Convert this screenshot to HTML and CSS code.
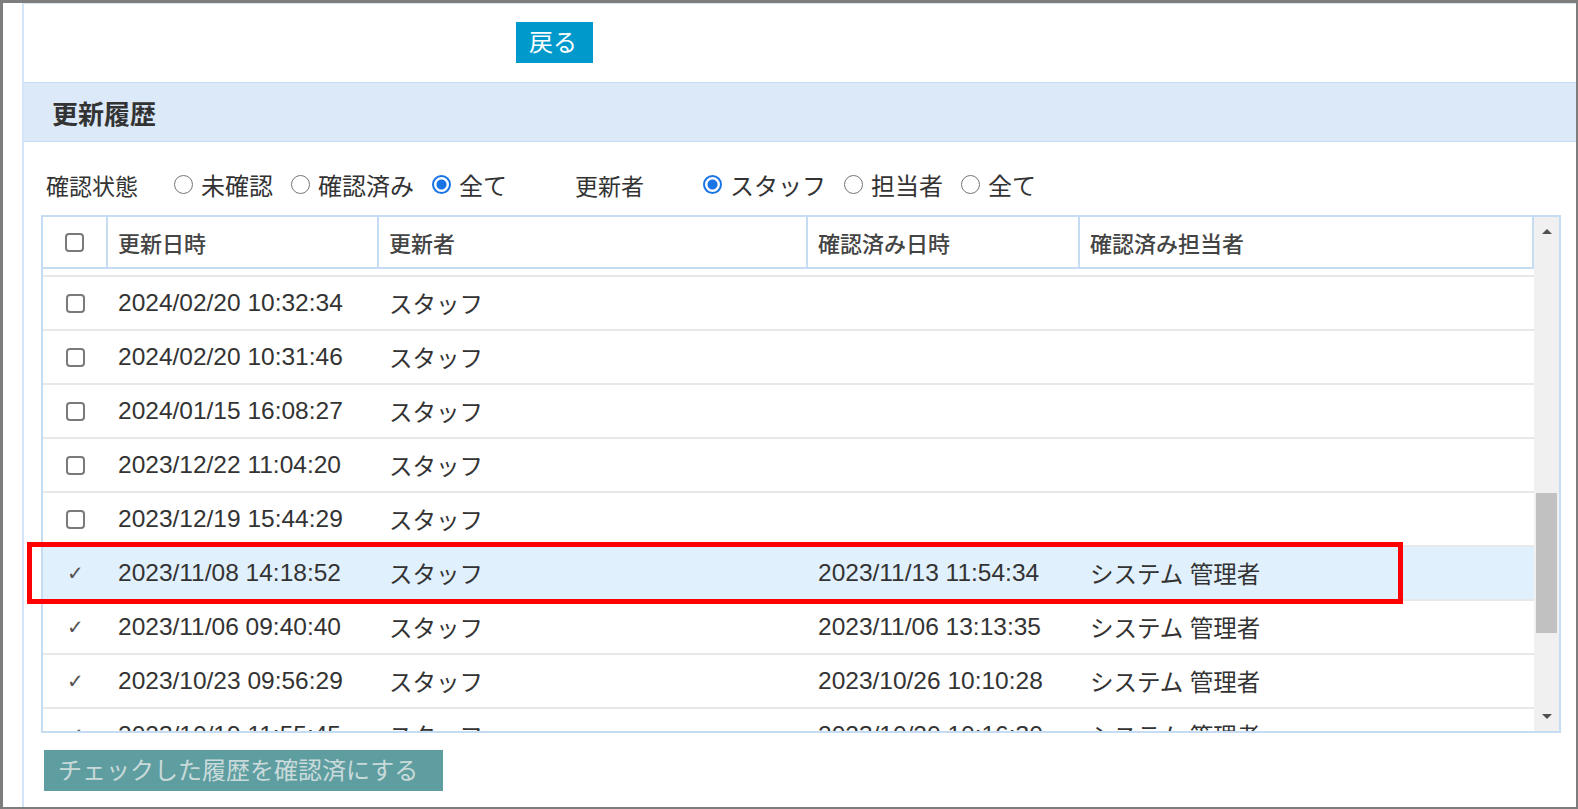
FILE: index.html
```html
<!DOCTYPE html>
<html lang="ja">
<head>
    <meta charset="UTF-8">
    <meta name="viewport" content="width=device-width, initial-scale=1.0">
    <title>更新履歴</title>
    <link rel="stylesheet" href="styles.css">
</head>
<body>

<div class="frame">
    <div class="panel">
        <div class="top-bar">
            <button class="back-btn" type="button">戻る</button>
        </div>

        <div class="section-head">更新履歴</div>

        <div class="filters">
            <div class="filter-group">
                <span class="filter-label">確認状態</span>
                <label class="opt"><input type="radio" name="state">未確認</label>
                <label class="opt"><input type="radio" name="state">確認済み</label>
                <label class="opt"><input type="radio" name="state" checked>全て</label>
            </div>
            <div class="filter-group">
                <span class="filter-label">更新者</span>
                <label class="opt"><input type="radio" name="user" checked>スタッフ</label>
                <label class="opt"><input type="radio" name="user">担当者</label>
                <label class="opt"><input type="radio" name="user">全て</label>
            </div>
        </div>

        <div class="table-wrap">
            <div class="grid">
                <div class="grid-head">
                    <div class="head-cell check"><input type="checkbox"></div>
                    <div class="head-cell">更新日時</div>
                    <div class="head-cell">更新者</div>
                    <div class="head-cell">確認済み日時</div>
                    <div class="head-cell">確認済み担当者</div>
                </div>
                <div class="grid-body">
                    <div class="rows">
                        <!-- row scrolled out of view -->
                        <div class="row spacer"></div>
                        <div class="row">
                            <div class="cell check"><input type="checkbox"></div>
                            <div class="cell">2024/02/20 10:32:34</div>
                            <div class="cell jp">スタッフ</div>
                            <div class="cell"></div>
                            <div class="cell"></div>
                        </div>
                        <div class="row">
                            <div class="cell check"><input type="checkbox"></div>
                            <div class="cell">2024/02/20 10:31:46</div>
                            <div class="cell jp">スタッフ</div>
                            <div class="cell"></div>
                            <div class="cell"></div>
                        </div>
                        <div class="row">
                            <div class="cell check"><input type="checkbox"></div>
                            <div class="cell">2024/01/15 16:08:27</div>
                            <div class="cell jp">スタッフ</div>
                            <div class="cell"></div>
                            <div class="cell"></div>
                        </div>
                        <div class="row">
                            <div class="cell check"><input type="checkbox"></div>
                            <div class="cell">2023/12/22 11:04:20</div>
                            <div class="cell jp">スタッフ</div>
                            <div class="cell"></div>
                            <div class="cell"></div>
                        </div>
                        <div class="row">
                            <div class="cell check"><input type="checkbox"></div>
                            <div class="cell">2023/12/19 15:44:29</div>
                            <div class="cell jp">スタッフ</div>
                            <div class="cell"></div>
                            <div class="cell"></div>
                        </div>
                        <div class="row selected">
                            <div class="cell check"><span class="tick">✓</span></div>
                            <div class="cell">2023/11/08 14:18:52</div>
                            <div class="cell jp">スタッフ</div>
                            <div class="cell">2023/11/13 11:54:34</div>
                            <div class="cell jp">システム 管理者</div>
                        </div>
                        <div class="row">
                            <div class="cell check"><span class="tick">✓</span></div>
                            <div class="cell">2023/11/06 09:40:40</div>
                            <div class="cell jp">スタッフ</div>
                            <div class="cell">2023/11/06 13:13:35</div>
                            <div class="cell jp">システム 管理者</div>
                        </div>
                        <div class="row">
                            <div class="cell check"><span class="tick">✓</span></div>
                            <div class="cell">2023/10/23 09:56:29</div>
                            <div class="cell jp">スタッフ</div>
                            <div class="cell">2023/10/26 10:10:28</div>
                            <div class="cell jp">システム 管理者</div>
                        </div>
                        <div class="row">
                            <div class="cell check"><span class="tick">✓</span></div>
                            <div class="cell">2023/10/19 11:55:45</div>
                            <div class="cell jp">スタッフ</div>
                            <div class="cell">2023/10/20 10:16:30</div>
                            <div class="cell jp">システム 管理者</div>
                        </div>
                    </div>
                </div>
            </div>
            <div class="scrollbar">
                <span class="arrow-up"></span>
                <span class="thumb"></span>
                <span class="arrow-down"></span>
            </div>
        </div>

        <div class="actions">
            <button class="confirm-btn" type="button" disabled>チェックした履歴を確認済にする</button>
        </div>
    </div>

    <!-- annotation -->
    <div class="mark"></div>
</div>

</body>
</html>
```

FILE: styles.css
```css
html, body {
    margin: 0;
    padding: 0;
}

body {
    font-family: "Liberation Sans", "Noto Sans CJK JP", sans-serif;
    color: #333;
    background: #fff;
}

.frame {
    position: relative;
    height: 100vh;
    box-sizing: border-box;
    border-style: solid;
    border-color: #7d7d7d;
    border-width: 3px 2px 2px 3px;
    padding-left: 19px;
    overflow: hidden;
}

.panel {
    height: 100%;
    box-sizing: border-box;
    border-left: 2px solid #d2e4f7;
    border-top: 1px solid #d2e4f7;
}

.top-bar {
    height: 78px;
    box-sizing: border-box;
    padding: 18px 0 0 492px;
}

.back-btn {
    display: block;
    width: 77px;
    height: 41px;
    box-sizing: border-box;
    padding: 0 0 0 13px;
    border: none;
    background-color: #0099cc;
    color: #fff;
    font-family: inherit;
    font-size: 24px;
    line-height: 41px;
    text-align: left;
}

.section-head {
    height: 60px;
    box-sizing: border-box;
    border-top: 1px solid #c8ddf3;
    border-bottom: 1px solid #c8ddf3;
    background-color: #dbe9f8;
    padding-left: 28px;
    display: flex;
    align-items: center;
    font-size: 26px;
    font-weight: bold;
    color: #333;
}

.filters {
    height: 73px;
    box-sizing: border-box;
    padding: 12px 0 0 22px;
    display: flex;
    align-items: center;
    font-size: 24px;
    color: #333;
}

.filter-group {
    display: flex;
    align-items: center;
}

.filter-group + .filter-group {
    margin-left: 50px;
}

.filter-label {
    width: 128px;
    font-size: 23px;
}

.opt {
    display: inline-flex;
    align-items: center;
    margin-right: 18px;
}

.opt input {
    appearance: none;
    -webkit-appearance: none;
    flex-shrink: 0;
    width: 19px;
    height: 19px;
    margin: 0 8px 0 0;
    box-sizing: border-box;
    border: 1.5px solid #767676;
    border-radius: 50%;
    background: #fff;
}

.opt input:checked {
    border: 2px solid #1a74e6;
    background: radial-gradient(circle, #1a74e6 0, #1a74e6 4.5px, #fff 5.5px);
}

.table-wrap {
    margin-left: 17px;
    width: 1520px;
    height: 518px;
    box-sizing: border-box;
    border: 2px solid #c6dcf2;
    display: flex;
}

.grid {
    flex: 1;
    display: flex;
    flex-direction: column;
}

.grid-head,
.row {
    display: grid;
    grid-template-columns: 65px 271px 429px 272px 1fr;
}

.grid-head {
    height: 52px;
    box-sizing: border-box;
    border-bottom: 2px solid #c6dcf2;
    font-size: 22px;
    font-weight: 500;
    color: #444;
}

.head-cell {
    display: flex;
    align-items: center;
    padding-left: 10px;
    border-right: 2px solid #c6dcf2;
}

.head-cell.check,
.cell.check {
    padding: 0;
    justify-content: center;
}

input[type="checkbox"] {
    appearance: none;
    -webkit-appearance: none;
    flex-shrink: 0;
    width: 19px;
    height: 19px;
    margin: 0;
    box-sizing: border-box;
    border: 2px solid #7a7a7a;
    border-radius: 4px;
    background: #fff;
}

.grid-body {
    flex: 1;
    overflow: hidden;
}

.rows {
    margin-top: -46px;
}

.row {
    height: 54px;
    box-sizing: border-box;
    border-bottom: 2px solid #e8e8e8;
    align-items: center;
    font-size: 24.5px;
    color: #333;
}

.row.selected {
    background-color: #e1f0fd;
}

.cell {
    display: flex;
    align-items: center;
    padding-left: 10px;
    white-space: nowrap;
}

.cell.jp {
    font-size: 23.5px;
}

.tick {
    font-family: "DejaVu Sans", sans-serif;
    font-size: 20px;
    line-height: 1;
    color: #555;
}

.scrollbar {
    width: 25px;
    background-color: #f0f0f0;
    display: flex;
    flex-direction: column;
    align-items: center;
    padding: 12px 0;
    box-sizing: border-box;
}

.arrow-up {
    width: 0;
    height: 0;
    border-left: 5px solid transparent;
    border-right: 5px solid transparent;
    border-bottom: 5px solid #505050;
}

.thumb {
    width: 21px;
    height: 140px;
    margin-top: 259px;
    background-color: #c1c1c1;
}

.arrow-down {
    width: 0;
    height: 0;
    margin-top: auto;
    border-left: 5px solid transparent;
    border-right: 5px solid transparent;
    border-top: 5px solid #505050;
}

.actions {
    padding: 17px 0 0 20px;
}

.confirm-btn {
    display: block;
    width: 399px;
    height: 41px;
    box-sizing: border-box;
    padding: 0 0 0 14px;
    border: none;
    background-color: #5f9ea0;
    color: #c9dadb;
    font-family: inherit;
    font-size: 24px;
    line-height: 41px;
    text-align: left;
}

.mark {
    position: absolute;
    left: 24px;
    top: 539px;
    width: 1376px;
    height: 62px;
    box-sizing: border-box;
    border: 5px solid #ff0000;
    pointer-events: none;
}
```
